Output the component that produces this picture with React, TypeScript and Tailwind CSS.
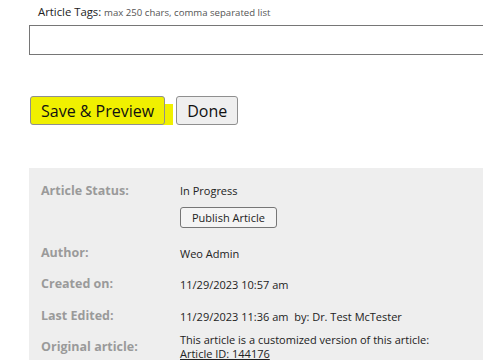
import React from 'react';

const rows = [
  { label: 'Created on:', value: '11/29/2023 10:57 am', gap: 'mt-[12px]' },
  { label: 'Last Edited:', value: '11/29/2023 11:36 am\u00a0\u00a0by: Dr. Test McTester', gap: 'mt-[13px]' },
];

export default function App() {
  return (
    <div className="w-[483px] h-[360px] overflow-hidden bg-white font-['Open_Sans',sans-serif] text-[#222]">
      {/* Tags field */}
      <div className="pt-[4px] pl-[38px] text-[11.3px] leading-[16px]">
        Article Tags: <span className="text-[9.6px] text-[#555]">max 250 chars, comma separated list</span>
      </div>
      <div className="ml-[29px] mt-[4px] w-[480px] h-[30px] border border-[#767676] bg-white" />

      {/* Buttons */}
      <div className="relative flex gap-[11px] ml-[30px] mt-[41px]">
        <div className="absolute left-[125px] top-[8px] w-[18px] h-[21px] bg-[#f0f000]" />
        <button className="relative h-[29px] px-[10px] rounded-[3px] border border-[#8f8f8f] bg-[#f0f000] text-[16px] text-[#111]">
          Save &amp; Preview
        </button>
        <button className="relative h-[29px] px-[10px] rounded-[3px] border border-[#8f8f8f] bg-[#efefef] text-[16px] text-[#111]">
          Done
        </button>
      </div>

      {/* Info panel */}
      <div className="ml-[29px] mt-[43px] bg-[#eeeeee] pt-[14px] pl-[12px] h-[200px] text-[11px]">
        <div className="flex">
          <div className="w-[139px] text-[12.5px] font-bold text-[#9a9a9a] leading-[18px]">Article Status:</div>
          <div className="flex flex-col items-start">
            <div className="leading-[18px]">In Progress</div>
            <button className="mt-[7px] h-[21px] px-[11px] rounded-[3px] border border-[#767676] bg-[#f4f4f4] text-[11px] leading-[18px]">
              Publish Article
            </button>
          </div>
        </div>
        <div className="flex mt-[16px]">
          <div className="w-[139px] text-[12.5px] font-bold text-[#9a9a9a] leading-[18px]">Author:</div>
          <div className="leading-[18px] pt-[1px]">Weo Admin</div>
        </div>
        {rows.map((r) => (
          <div key={r.label} className={`flex ${r.gap}`}>
            <div className="w-[139px] text-[12.5px] font-bold text-[#9a9a9a] leading-[18px]">{r.label}</div>
            <div className="leading-[18px] pt-[1px]">{r.value}</div>
          </div>
        ))}
        <div className="flex items-center mt-[7px]">
          <div className="w-[139px] text-[12.5px] font-bold text-[#9a9a9a] leading-[18px]">Original article:</div>
          <div className="leading-[14px]">
            <div>This article is a customized version of this article:</div>
            <a className="underline">Article ID: 144176</a>
          </div>
        </div>
      </div>
    </div>
  );
}
